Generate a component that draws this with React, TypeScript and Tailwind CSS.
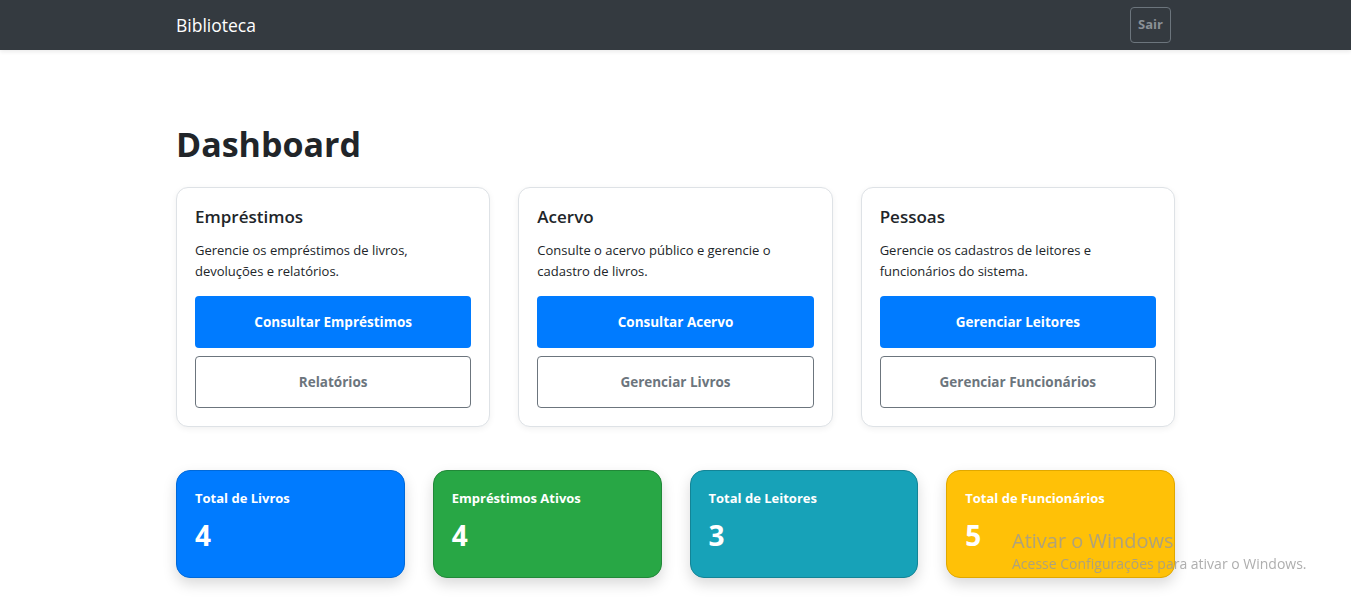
import React from "react"

const font = { fontFamily: '"Open Sans", "Noto Sans", sans-serif' }

interface SectionCard {
  title: string
  text: string
  primary: string
  secondary: string
}

const sections: SectionCard[] = [
  {
    title: "Empréstimos",
    text: "Gerencie os empréstimos de livros, devoluções e relatórios.",
    primary: "Consultar Empréstimos",
    secondary: "Relatórios",
  },
  {
    title: "Acervo",
    text: "Consulte o acervo público e gerencie o cadastro de livros.",
    primary: "Consultar Acervo",
    secondary: "Gerenciar Livros",
  },
  {
    title: "Pessoas",
    text: "Gerencie os cadastros de leitores e funcionários do sistema.",
    primary: "Gerenciar Leitores",
    secondary: "Gerenciar Funcionários",
  },
]

const stats = [
  { label: "Total de Livros", value: 4, cls: "bg-[#007bff] border-[#0069d9]" },
  { label: "Empréstimos Ativos", value: 4, cls: "bg-[#28a745] border-[#218838]" },
  { label: "Total de Leitores", value: 3, cls: "bg-[#17a2b8] border-[#138496]" },
  { label: "Total de Funcionários", value: 5, cls: "bg-[#ffc107] border-[#e0a800]" },
]

export default function App() {
  return (
    <div className="min-h-[606px] bg-white text-[#212529]" style={font}>
      {/* Navbar */}
      <nav className="h-[50px] bg-[#343a40] shadow-[0_2px_4px_rgba(0,0,0,0.08)]">
        <div className="mx-auto flex h-full w-[999px] items-center justify-between">
          <span className="text-[17.5px] text-white">Biblioteca</span>
          <button className="mr-[4px] h-[36px] rounded-[4px] border border-[#6c757d] px-[7px] text-[13px] font-bold text-[#8a9096]">
            Sair
          </button>
        </div>
      </nav>

      <main className="mx-auto w-[999px] pt-[70px]">
        <h1 className="mb-[19px] text-[34px] leading-[48px] font-bold">Dashboard</h1>

        {/* Section cards */}
        <div className="grid grid-cols-3 gap-[28px]">
          {sections.map((s) => (
            <div
              key={s.title}
              className="rounded-[12px] border border-[#dee2e6] bg-white px-[18px] pt-[17px] pb-[18px] shadow-[0_2px_6px_rgba(0,0,0,0.06)]"
            >
              <h5 className="mb-[11px] text-[17px] leading-[24px] font-semibold">{s.title}</h5>
              <p className="mb-[14px] text-[13px] leading-[21px]">{s.text}</p>
              <div className="flex flex-col gap-[8px]">
                <button className="h-[52px] rounded-[4px] bg-[#007bff] text-[13.5px] font-bold text-white">
                  {s.primary}
                </button>
                <button className="h-[52px] rounded-[4px] border border-[#6c757d] bg-white text-[13.5px] font-bold text-[#6c757d]">
                  {s.secondary}
                </button>
              </div>
            </div>
          ))}
        </div>

        {/* Stats */}
        <div className="mt-[43px] grid grid-cols-4 gap-[28px]">
          {stats.map((st) => (
            <div
              key={st.label}
              className={`h-[108px] rounded-[14px] border px-[18px] pt-[17px] text-white shadow-[0_6px_14px_rgba(0,0,0,0.15)] ${st.cls}`}
            >
              <div className="text-[13px] leading-[21px] font-bold">{st.label}</div>
              <div className="mt-[9px] text-[28px] leading-[34px] font-bold">{st.value}</div>
            </div>
          ))}
        </div>
      </main>

      {/* Windows activation watermark */}
      <div className="pointer-events-none fixed top-[528px] left-[1012px] text-[#9a9a9a]/80">
        <div className="text-[20px] leading-[26px]">Ativar o Windows</div>
        <div className="text-[14px] leading-[20px]">Acesse Configurações para ativar o Windows.</div>
      </div>
    </div>
  )
}
